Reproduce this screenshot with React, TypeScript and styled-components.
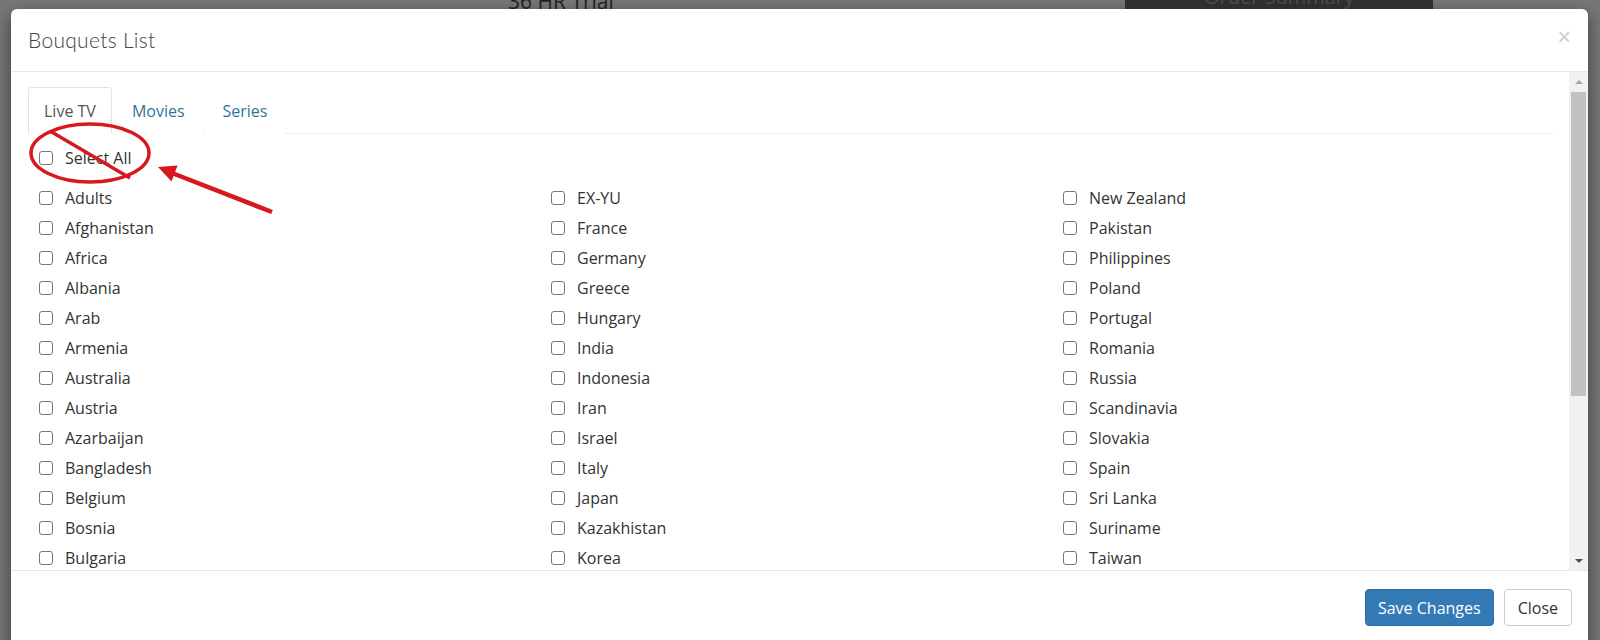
import styled, { createGlobalStyle } from "styled-components";

const GlobalStyle = createGlobalStyle`
  html, body {
    margin: 0;
    height: 640px;
    overflow: hidden;
    background: #767676;
    font-family: "Open Sans", "Liberation Sans", sans-serif;
  }
`;

const columns: string[][] = [
  ["Adults", "Afghanistan", "Africa", "Albania", "Arab", "Armenia", "Australia", "Austria", "Azarbaijan", "Bangladesh", "Belgium", "Bosnia", "Bulgaria"],
  ["EX-YU", "France", "Germany", "Greece", "Hungary", "India", "Indonesia", "Iran", "Israel", "Italy", "Japan", "Kazakhistan", "Korea"],
  ["New Zealand", "Pakistan", "Philippines", "Poland", "Portugal", "Romania", "Russia", "Scandinavia", "Slovakia", "Spain", "Sri Lanka", "Suriname", "Taiwan"],
];

const Page = styled.div`
  position: relative;
  width: 1600px;
  height: 640px;
  overflow: hidden;
`;

// what is left visible of the page behind the modal
const Backdrop = styled.div`
  display: flex;
  height: 9px;
  overflow: hidden;
  background: #777;
`;

const TrialText = styled.div`
  margin: -9px 0 0 508px;
  font-size: 21px;
  color: #222;
  line-height: 1;
`;

const OrderBox = styled.div`
  margin-left: auto;
  margin-right: 167px;
  width: 308px;
  background: #2f302e;
  color: #4c4c4c;
  font-size: 20px;
  line-height: 1;
  text-align: center;
  span {
    display: block;
    margin-top: -13px;
  }
`;

const Modal = styled.div`
  margin: 0 12px 0 11px;
  height: 660px;
  background: #fff;
  border-radius: 6px;
  box-shadow: 0 5px 15px rgba(0, 0, 0, 0.5);
  display: flex;
  flex-direction: column;
`;

const Header = styled.div`
  height: 62px;
  display: flex;
  align-items: center;
  justify-content: space-between;
  padding: 0 17px;
  border-bottom: 1px solid #e8e8e8;
  flex-shrink: 0;
`;

const Title = styled.h4`
  margin: 0 0 2px;
  font-family: "Lato", sans-serif;
  font-weight: 300;
  font-size: 21px;
  color: #444;
  letter-spacing: 0.3px;
`;

const CloseX = styled.span`
  font-family: "Liberation Sans", sans-serif;
  font-size: 23px;
  color: #cdcdcd;
  margin: 0 0 6px 0;
`;

const BodyWrap = styled.div`
  display: flex;
  height: 498px;
  flex-shrink: 0;
`;

const Body = styled.div`
  flex: 1;
  padding: 15px 16px 0 17px;
  overflow: hidden;
`;

const Tabs = styled.div`
  display: flex;
  border-bottom: 1px solid #eee;
`;

const Tab = styled.div<{ $active?: boolean }>`
  height: 45px;
  display: flex;
  align-items: center;
  padding: 0 ${(p) => (p.$active ? "15px" : "17px")};
  margin: 0 2px -1px 0;
  font-size: 16px;
  color: ${(p) => (p.$active ? "#555" : "#2f7596")};
  background: #fff;
  border: 1px solid ${(p) => (p.$active ? "#e3e3e3" : "transparent")};
  border-bottom-color: ${(p) => (p.$active ? "#fff" : "transparent")};
  border-radius: 4px 4px 0 0;
`;

const CheckRow = styled.label`
  display: flex;
  align-items: center;
  gap: 12px;
  height: 30px;
  padding-left: 11px;
  font-size: 16px;
  font-weight: 500;
  color: #333;
  white-space: nowrap;
`;

const Check = styled.input.attrs({ type: "checkbox" })`
  appearance: none;
  width: 14px;
  height: 14px;
  margin: 0;
  border: 1px solid #777;
  border-radius: 3px;
  background: #fff;
`;

const SelectAll = styled.div`
  margin: 9px 0 10px;
`;

const Grid = styled.div`
  display: grid;
  grid-template-columns: repeat(3, 502px);
  column-gap: 10px;
`;

const Column = styled.div`
  display: flex;
  flex-direction: column;
`;

const Scrollbar = styled.div`
  width: 19px;
  display: flex;
  flex-direction: column;
  background: #f1f1f1;
`;

const ScrollArrow = styled.div<{ $down?: boolean }>`
  height: 19px;
  display: flex;
  align-items: center;
  justify-content: center;
  &::after {
    content: "";
    border-left: 4px solid transparent;
    border-right: 4px solid transparent;
    ${(p) =>
      p.$down
        ? "border-top: 4px solid #505050;"
        : "border-bottom: 4px solid #a3a3a3;"}
  }
`;

const ScrollTrack = styled.div`
  flex: 1;
  padding: 1px 2px;
`;

const ScrollThumb = styled.div`
  height: 304px;
  background: #c1c1c1;
`;

const Footer = styled.div`
  display: flex;
  justify-content: flex-end;
  gap: 10px;
  padding: 18px 16px 0;
  border-top: 1px solid #e8e8e8;
`;

const Button = styled.button<{ $primary?: boolean }>`
  height: 37px;
  padding: 0 ${(p) => (p.$primary ? "12px" : "13px")};
  font-family: "Open Sans", sans-serif;
  font-size: 16px;
  border-radius: 4px;
  border: 1px solid ${(p) => (p.$primary ? "#2e6da4" : "#ccc")};
  background: ${(p) => (p.$primary ? "#337ab7" : "#fff")};
  color: ${(p) => (p.$primary ? "#fff" : "#333")};
`;

const Annotation = styled.svg`
  position: absolute;
  left: 0;
  top: 0;
  pointer-events: none;
`;

export default function App() {
  return (
    <Page>
      <GlobalStyle />
      <Backdrop>
        <TrialText>36 HR Trial</TrialText>
        <OrderBox>
          <span>Order Summary</span>
        </OrderBox>
      </Backdrop>
      <Modal>
        <Header>
          <Title>Bouquets List</Title>
          <CloseX>×</CloseX>
        </Header>
        <BodyWrap>
          <Body>
            <Tabs>
              <Tab $active>Live TV</Tab>
              <Tab>Movies</Tab>
              <Tab>Series</Tab>
            </Tabs>
            <SelectAll>
              <CheckRow>
                <Check />
                Select All
              </CheckRow>
            </SelectAll>
            <Grid>
              {columns.map((col, i) => (
                <Column key={i}>
                  {col.map((name) => (
                    <CheckRow key={name}>
                      <Check />
                      {name}
                    </CheckRow>
                  ))}
                </Column>
              ))}
            </Grid>
          </Body>
          <Scrollbar>
            <ScrollArrow />
            <ScrollTrack>
              <ScrollThumb />
            </ScrollTrack>
            <ScrollArrow $down />
          </Scrollbar>
        </BodyWrap>
        <Footer>
          <Button $primary>Save Changes</Button>
          <Button>Close</Button>
        </Footer>
      </Modal>
      <Annotation width="1600" height="640" viewBox="0 0 1600 640">
        <ellipse cx="90" cy="153" rx="59" ry="29" fill="none" stroke="#d7191f" strokeWidth="3.5" />
        <line x1="50" y1="131" x2="130" y2="178" stroke="#d7191f" strokeWidth="3.5" />
        <line x1="272" y1="212" x2="172" y2="173" stroke="#d7191f" strokeWidth="4.5" />
        <polygon points="158,167 177.6,165.5 171.5,181.5" fill="#d7191f" />
      </Annotation>
    </Page>
  );
}
